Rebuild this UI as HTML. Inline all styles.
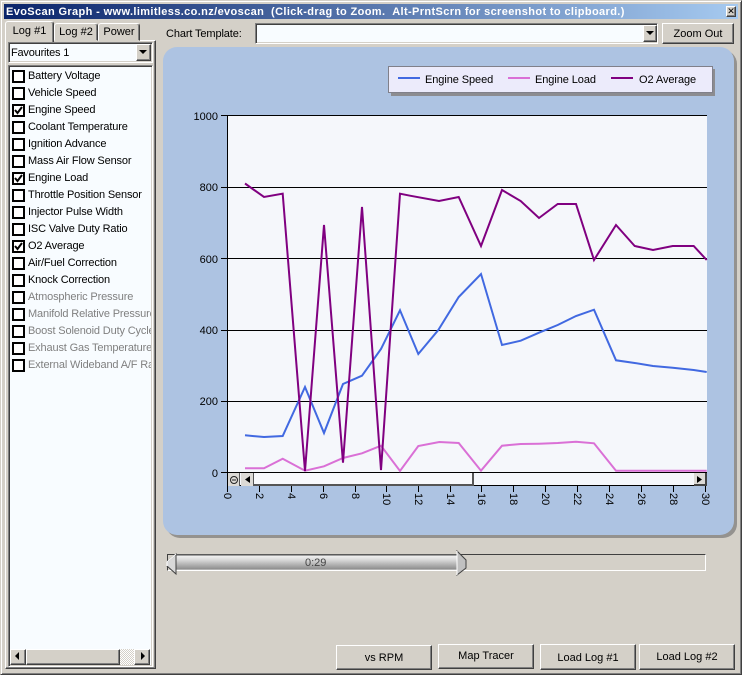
<!DOCTYPE html>
<html><head><meta charset="utf-8"><style>
html,body{margin:0;padding:0}
body{width:742px;height:675px;position:relative;overflow:hidden;background:#d4d0c8;font:11px/14px "Liberation Sans",sans-serif;color:#000}
.a{position:absolute;box-sizing:border-box}
.t{position:absolute;white-space:nowrap}
.btn{position:absolute;box-sizing:border-box;background:#d4d0c8;border:1px solid;border-color:#fff #404040 #404040 #fff;box-shadow:inset -1px -1px 0 #808080;text-align:center}
.sunk{position:absolute;box-sizing:border-box;background:#f8fcff;border:1px solid;border-color:#808080 #fff #fff #808080;box-shadow:inset 1px 1px 0 #404040,inset -1px -1px 0 #d4d0c8}
.cb{position:absolute;left:12px;width:13px;height:13px;border:2px solid #000;background:#fff;box-sizing:border-box}
.lb{position:absolute;left:28px;white-space:nowrap;width:123px;overflow:hidden;letter-spacing:-.15px}
.d{color:#808080}
.tab{position:absolute;box-sizing:border-box;background:#d4d0c8;border:1px solid;border-color:#fff #404040 #d4d0c8 #fff;border-radius:3px 3px 0 0;text-align:center;box-shadow:inset -1px 0 0 #808080}
</style></head><body>
<div class="a" style="left:0;top:0;width:742px;height:675px;border:1px solid;border-color:#d4d0c8 #404040 #404040 #d4d0c8;box-shadow:inset 1px 1px 0 #fff,inset -1px -1px 0 #808080"></div>
<div class="a" style="left:4px;top:4px;width:734px;height:15px;background:linear-gradient(90deg,#0a246a,#a6caf0)"></div>
<div class="t" style="left:6px;top:5px;color:#fff;font-weight:bold;font-size:11px;letter-spacing:.37px">EvoScan Graph - www.limitless.co.nz/evoscan &nbsp;(Click-drag to Zoom. &nbsp;Alt-PrntScrn for screenshot to clipboard.)</div>
<div class="btn" style="left:726px;top:6px;width:10px;height:11px;padding:0;line-height:9px;font-size:9px">✕</div>

<!-- tab pane -->
<div class="a" style="left:5px;top:40px;width:151px;height:629px;border:1px solid;border-color:#fff #404040 #404040 #fff;box-shadow:inset -1px -1px 0 #808080"></div>
<div class="tab" style="left:54px;top:23px;width:44px;height:18px;line-height:17px">Log #2</div>
<div class="tab" style="left:98px;top:23px;width:42px;height:18px;line-height:17px">Power</div>
<div class="tab" style="left:5px;top:21px;width:49px;height:21px;line-height:18px;border-bottom:0">Log #1</div>

<div class="sunk" style="left:8px;top:42px;width:145px;height:21px"></div>
<div class="t" style="left:11px;top:46px;letter-spacing:-.2px">Favourites 1</div>
<div class="btn" style="left:136px;top:44px;width:15px;height:17px"></div>
<svg class="a" style="left:139px;top:50px" width="9" height="5"><path d="M0 0H8L4 4Z" fill="#000"/></svg>

<div class="sunk" style="left:8px;top:65px;width:145px;height:602px"></div>

<div class="cb" style="top:70px"></div><div class="lb" style="top:69px">Battery Voltage</div>
<div class="cb" style="top:87px"></div><div class="lb" style="top:86px">Vehicle Speed</div>
<div class="cb" style="top:104px"></div><div class="lb" style="top:103px">Engine Speed</div>
<div class="cb" style="top:121px"></div><div class="lb" style="top:120px">Coolant Temperature</div>
<div class="cb" style="top:138px"></div><div class="lb" style="top:137px">Ignition Advance</div>
<div class="cb" style="top:155px"></div><div class="lb" style="top:154px">Mass Air Flow Sensor</div>
<div class="cb" style="top:172px"></div><div class="lb" style="top:171px">Engine Load</div>
<div class="cb" style="top:189px"></div><div class="lb" style="top:188px">Throttle Position Sensor</div>
<div class="cb" style="top:206px"></div><div class="lb" style="top:205px">Injector Pulse Width</div>
<div class="cb" style="top:223px"></div><div class="lb" style="top:222px">ISC Valve Duty Ratio</div>
<div class="cb" style="top:240px"></div><div class="lb" style="top:239px">O2 Average</div>
<div class="cb" style="top:257px"></div><div class="lb" style="top:256px">Air/Fuel Correction</div>
<div class="cb" style="top:274px"></div><div class="lb" style="top:273px">Knock Correction</div>
<div class="cb" style="top:291px"></div><div class="lb d" style="top:290px">Atmospheric Pressure</div>
<div class="cb" style="top:308px"></div><div class="lb d" style="top:307px">Manifold Relative Pressure</div>
<div class="cb" style="top:325px"></div><div class="lb d" style="top:324px">Boost Solenoid Duty Cycle</div>
<div class="cb" style="top:342px"></div><div class="lb d" style="top:341px">Exhaust Gas Temperature</div>
<div class="cb" style="top:359px"></div><div class="lb d" style="top:358px">External Wideband A/F Ratio</div>
<svg class="a" style="left:12px;top:70px" width="13" height="190"><g fill="none" stroke="#000" stroke-width="2"><path d="M3 40l2.500 3 4.500-6"/><path d="M3 108l2.500 3 4.500-6"/><path d="M3 176l2.500 3 4.500-6"/></g></svg>

<!-- list scrollbar -->
<div class="a" style="left:120px;top:649px;width:15px;height:16px;background:repeating-conic-gradient(#d4d0c8 0 25%,#fff 0 50%) 0 0/2px 2px"></div>
<div class="btn" style="left:10px;top:649px;width:16px;height:16px"></div>
<div class="btn" style="left:26px;top:649px;width:94px;height:16px"></div>
<div class="btn" style="left:134px;top:649px;width:16px;height:16px"></div>
<svg class="a" style="left:14px;top:652px" width="6" height="10"><path d="M5 0V8L1 4Z" fill="#000"/></svg>
<svg class="a" style="left:140px;top:652px" width="6" height="10"><path d="M1 0V8L5 4Z" fill="#000"/></svg>

<!-- chart template -->
<div class="t" style="left:166px;top:27px;letter-spacing:-.12px">Chart Template:</div>
<div class="sunk" style="left:255px;top:23px;width:403px;height:21px"></div>
<div class="btn" style="left:643px;top:25px;width:14px;height:17px"></div>
<svg class="a" style="left:646px;top:31px" width="9" height="5"><path d="M0 0H8L4 4Z" fill="#000"/></svg>
<div class="btn" style="left:662px;top:23px;width:72px;height:21px;line-height:21px">Zoom Out</div>

<!-- chart panel -->
<div class="a" style="left:166px;top:50px;width:571px;height:488px;border-radius:14px;background:#94928f"></div>
<div class="a" style="left:163px;top:47px;width:571px;height:488px;border-radius:14px;background:#adc3e2"></div>

<!-- legend -->
<div class="a" style="left:391px;top:69px;width:324px;height:27px;background:#8c8c90"></div>
<div class="a" style="left:388px;top:66px;width:325px;height:27px;background:#ecebfb;border:1px solid #80808a"></div>
<div class="a" style="left:398px;top:77px;width:22px;height:2px;background:#4169e1"></div>
<div class="t" style="left:425px;top:73px;letter-spacing:-.08px">Engine Speed</div>
<div class="a" style="left:508px;top:77px;width:22px;height:2px;background:#da70d6"></div>
<div class="t" style="left:535px;top:73px;letter-spacing:-.08px">Engine Load</div>
<div class="a" style="left:611px;top:77px;width:22px;height:2px;background:#800080"></div>
<div class="t" style="left:639px;top:73px;letter-spacing:-.08px">O2 Average</div>

<!-- plot -->
<div class="a" style="left:227px;top:115px;width:480px;height:358px;background:#f5f7fb"></div>
<svg class="a" style="left:0;top:0" width="742" height="675">
<g stroke="#000" stroke-width="1" shape-rendering="crispEdges">
<path d="M221 115.500H707M221 187.500H707M221 258.500H707M221 330.500H707M221 401.500H707M221 472.500H707"/>
<path d="M227.500 115V486"/>
<path d="M227.500 486V492M259.500 486V492M291.500 486V492M323.500 486V492M355.500 486V492M386.500 486V492M418.500 486V492M450.500 486V492M481.500 486V492M513.500 486V492M545.500 486V492M577.500 486V492M609.500 486V492M641.500 486V492M673.500 486V492M705.500 486V492"/>
</g>
<g fill="none" stroke-width="2" stroke-linejoin="miter">
<polyline stroke="#4169e1" points="245,435.300 264,437 282.700,436 305,387 324,433 343,384 362,375.700 381,349 400,310.300 418.300,354 438.300,330 458.700,297 481,274 502,345 520.700,340.700 539,332.700 557.700,325 576,316 594,309.700 616,360.300 634.700,363 653,366 672.700,367.700 693.700,370 706.700,372"/>
<polyline stroke="#da70d6" points="245,468.300 264,468.300 282.700,458.700 305,470.700 324,466.300 343,458 362,453.300 381,445.700 400,471 418.300,446 439.300,442 458.700,443 481,470.700 502,445.700 520.700,444 539,443.700 557.700,443 576,441.700 594,443.300 616,470.700 706.700,470.700"/>
<polyline stroke="#800080" points="245,183.500 264,197 282.700,193.700 305,471 324,225 343,462.700 362,207 381,470 400,193.700 410,195.700 439,201 458.700,197 481,246 502,190 520.700,201 539,218 557.700,204 576,204 594,260 616,225 634.700,246 653,250 672.700,246 693.700,246 706.700,260"/>
</g>
<g font-family="'Liberation Sans',sans-serif" font-size="11" fill="#000" text-anchor="end">
<text x="218" y="120">1000</text><text x="218" y="191">800</text><text x="218" y="263">600</text><text x="218" y="334">400</text><text x="218" y="405">200</text><text x="218" y="477">0</text>
</g>
<g font-family="'Liberation Sans',sans-serif" font-size="11" fill="#000">
<text transform="translate(224 493) rotate(90)">0</text>
<text transform="translate(256 493) rotate(90)">2</text>
<text transform="translate(288 493) rotate(90)">4</text>
<text transform="translate(320 493) rotate(90)">6</text>
<text transform="translate(352 493) rotate(90)">8</text>
<text transform="translate(383 493) rotate(90)">10</text>
<text transform="translate(415 493) rotate(90)">12</text>
<text transform="translate(447 493) rotate(90)">14</text>
<text transform="translate(478 493) rotate(90)">16</text>
<text transform="translate(510 493) rotate(90)">18</text>
<text transform="translate(542 493) rotate(90)">20</text>
<text transform="translate(574 493) rotate(90)">22</text>
<text transform="translate(606 493) rotate(90)">24</text>
<text transform="translate(638 493) rotate(90)">26</text>
<text transform="translate(670 493) rotate(90)">28</text>
<text transform="translate(702 493) rotate(90)">30</text>
</g>
</svg>

<!-- chart scrollbar -->
<div class="a" style="left:228px;top:473px;width:479px;height:13px;background:#f5f7fb;border-bottom:1px solid #000"></div>
<div class="a" style="left:228px;top:473px;width:12px;height:13px;background:#dcdad6;border-right:1px solid #555"></div>
<svg class="a" style="left:229px;top:475px" width="10" height="10"><circle cx="5" cy="5" r="3.500" fill="none" stroke="#222"/><path d="M3 5H7" stroke="#222"/></svg>
<div class="a" style="left:241px;top:473px;width:13px;height:13px;background:#dcdad6;border-right:1px solid #555"></div>
<svg class="a" style="left:244px;top:476px" width="7" height="8"><path d="M6 0V7L1 3.500Z" fill="#000"/></svg>
<div class="a" style="left:254px;top:473px;width:220px;height:13px;background:#f8f9fc;border-right:2px solid #555;border-bottom:2px solid #555"></div>
<div class="a" style="left:694px;top:473px;width:13px;height:13px;background:#dcdad6;border-right:2px solid #444;border-bottom:2px solid #444"></div>
<svg class="a" style="left:696px;top:476px" width="7" height="8"><path d="M1 0V7L6 3.500Z" fill="#000"/></svg>

<!-- slider -->
<div class="a" style="left:167px;top:554px;width:539px;height:17px;border:1px solid;border-color:#404040 #fff #fff #404040"></div>
<div class="a" style="left:176px;top:554px;width:281px;height:17px;background:linear-gradient(#5a5a5a 0,#5a5a5a 6%,#f0f0f0 12%,#d8d8d8 35%,#a8a8a8 70%,#8c8c8c 90%,#fff 94%)"></div>
<svg class="a" style="left:166px;top:550px" width="12" height="26"><path d="M1 12L10 4V24L1 16Z" fill="#d8d8d8" stroke="#404040"/><path d="M10 4L1 12V16" fill="none" stroke="#fff"/></svg>
<svg class="a" style="left:456px;top:550px" width="12" height="26"><path d="M1 1L10 10V18L1 25Z" fill="#c0c0c0" stroke="#404040"/><path d="M1 1V25" stroke="#fff"/></svg>
<div class="t" style="left:305px;top:556px;color:#444">0:29</div>

<!-- bottom buttons -->
<div class="btn" style="left:336px;top:645px;width:96px;height:25px;line-height:25px">vs RPM</div>
<div class="btn" style="left:438px;top:644px;width:96px;height:25px;line-height:23px">Map Tracer</div>
<div class="btn" style="left:540px;top:644px;width:96px;height:26px;line-height:26px">Load Log #1</div>
<div class="btn" style="left:639px;top:644px;width:96px;height:26px;line-height:24px">Load Log #2</div>
</body></html>
